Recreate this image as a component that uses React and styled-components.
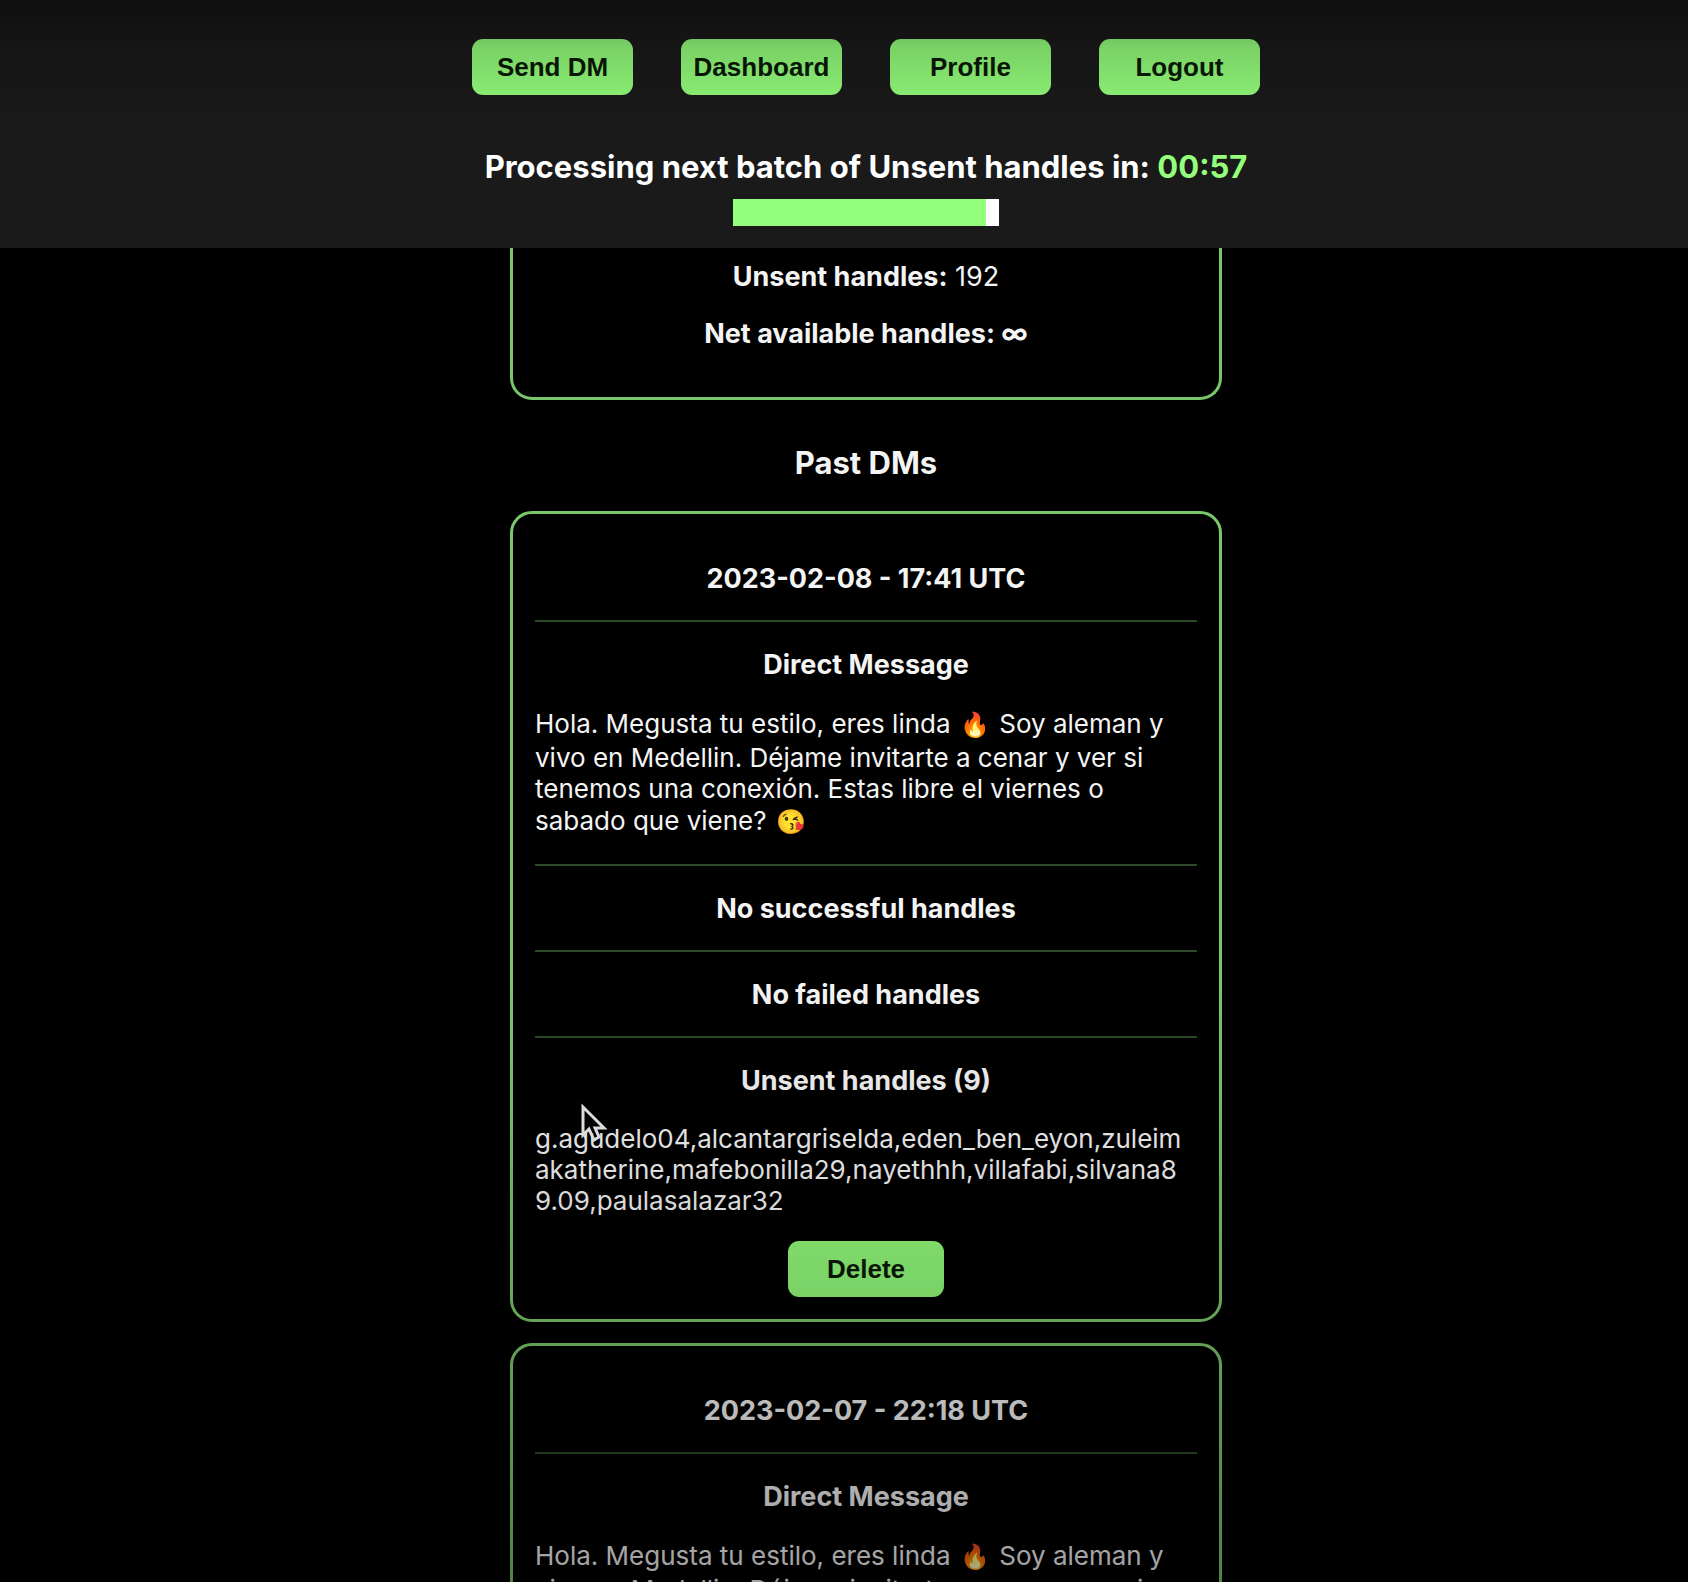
import styled, { createGlobalStyle } from "styled-components";

const GlobalStyle = createGlobalStyle`
  * {
    box-sizing: border-box;
  }

  body {
    margin: 0;
    background: #000;
    color: #f4f4f4;
    font-family: Inter, "Liberation Sans", sans-serif;
  }
`;

const Page = styled.div`
  height: 100vh;
  overflow: hidden;
`;

const Header = styled.header`
  display: flex;
  flex-direction: column;
  align-items: center;
  padding: 39px 0 22px 44px;
  background: #1a1a1a;
`;

const Nav = styled.nav`
  display: flex;
  gap: 48px;
  margin-bottom: 53px;
`;

const Button = styled.button`
  width: ${({ $width }) => $width || 161}px;
  height: 56px;
  padding: 0;
  border: none;
  border-radius: 11px;
  background: #92fb7a;
  color: #0b1a08;
  font-family: "Liberation Sans", Arial, sans-serif;
  font-size: 26px;
  font-weight: 700;
  cursor: pointer;
`;

const Countdown = styled.h2`
  margin: 0 0 13px;
  font-size: 31px;
  line-height: 38px;
  font-weight: 700;
  color: #fff;
`;

const Time = styled.span`
  color: #94ff7a;
`;

const Track = styled.div`
  width: 266px;
  height: 27px;
  background: #fff;
`;

const Fill = styled.div`
  height: 100%;
  background: #94ff7a;
`;

const Main = styled.main`
  display: flex;
  flex-direction: column;
  align-items: center;
  padding-left: 44px;
`;

const Card = styled.section`
  width: 100%;
  max-width: 712px;
  margin-bottom: 21px;
  padding: 22px;
  border: 3px solid #7ac66b;
  border-radius: 22px;
  text-align: center;
`;

const StatsCard = styled(Card)`
  margin-bottom: 44px;
  padding: 13px 22px 47px;
  border-top: none;
  border-radius: 0 0 22px 22px;
`;

const Stat = styled.p`
  margin: 0;
  font-size: 27px;
  line-height: 32px;

  & + & {
    margin-top: 25px;
  }
`;

const SectionTitle = styled.h2`
  margin: 0 0 29px;
  font-size: 31px;
  line-height: 38px;
  font-weight: 700;
`;

const CardTitle = styled.h3`
  margin: 27px 0 25px;
  font-size: 27px;
  line-height: 32px;
  font-weight: 700;
`;

const Divider = styled.hr`
  height: 2px;
  margin: 0;
  border: none;
  background: #2c4a28;
`;

const Message = styled.p`
  margin: 0 0 25px;
  padding: 1px 10px 0 0;
  font-size: 26px;
  line-height: 31px;
  text-align: left;
  overflow-wrap: anywhere;
`;

const Emoji = styled.span`
  display: inline-block;
  margin: 0 2px;
  font-size: 24px;
  line-height: 35px;
`;

const Fade = styled.div`
  position: fixed;
  inset: 0;
  pointer-events: none;
  background: linear-gradient(
    rgba(0, 0, 0, 0.4) 0%,
    rgba(0, 0, 0, 0.16) 3%,
    rgba(0, 0, 0, 0) 8%,
    rgba(0, 0, 0, 0) 62%,
    rgba(0, 0, 0, 0.14) 80%,
    rgba(0, 0, 0, 0.34) 100%
  );
`;

const Pointer = styled.svg`
  position: fixed;
  left: 580px;
  top: 1101px;
  pointer-events: none;
`;

const navItems = ["Send DM", "Dashboard", "Profile", "Logout"];

const pastDms = [
  {
    date: "2023-02-08 - 17:41 UTC",
    unsent: [
      "g.agudelo04",
      "alcantargriselda",
      "eden_ben_eyon",
      "zuleimakatherine",
      "mafebonilla29",
      "nayethhh",
      "villafabi",
      "silvana89.09",
      "paulasalazar32",
    ],
  },
  { date: "2023-02-07 - 22:18 UTC" },
];

function DmCard({ date, unsent }) {
  return (
    <Card>
      <CardTitle>{date}</CardTitle>
      <Divider />
      <CardTitle>Direct Message</CardTitle>
      <Message>
        Hola. Megusta tu estilo, eres linda <Emoji>🔥</Emoji> Soy aleman y vivo
        en Medellin. Déjame invitarte a cenar y ver si tenemos una conexión.
        Estas libre el viernes o sabado que viene? <Emoji>😘</Emoji>
      </Message>
      {unsent && (
        <>
          <Divider />
          <CardTitle>No successful handles</CardTitle>
          <Divider />
          <CardTitle>No failed handles</CardTitle>
          <Divider />
          <CardTitle>Unsent handles ({unsent.length})</CardTitle>
          <Message>{unsent.join(",")}</Message>
          <Button type="button" $width={156}>
            Delete
          </Button>
        </>
      )}
    </Card>
  );
}

export default function App() {
  const secondsLeft = 57;

  return (
    <Page>
      <GlobalStyle />
      <Header>
        <Nav>
          {navItems.map((item) => (
            <Button key={item} type="button">
              {item}
            </Button>
          ))}
        </Nav>
        <Countdown>
          Processing next batch of Unsent handles in:{" "}
          <Time>00:{secondsLeft}</Time>
        </Countdown>
        <Track>
          <Fill style={{ width: `${(secondsLeft / 60) * 100}%` }} />
        </Track>
      </Header>

      <Main>
        <StatsCard>
          <Stat>
            <strong>Unsent handles:</strong> 192
          </Stat>
          <Stat>
            <strong>Net available handles: ∞</strong>
          </Stat>
        </StatsCard>

        <SectionTitle>Past DMs</SectionTitle>
        {pastDms.map((dm) => (
          <DmCard key={dm.date} {...dm} />
        ))}
      </Main>

      <Fade />
      <Pointer width="28" height="42" viewBox="0 0 28 42" aria-hidden="true">
        <path
          d="M3 6V34L9 28L14 39L19 36L15 27H24Z"
          fill="rgba(0, 0, 0, 0.4)"
          stroke="#dcdcdc"
          strokeWidth="3"
        />
      </Pointer>
    </Page>
  );
}
